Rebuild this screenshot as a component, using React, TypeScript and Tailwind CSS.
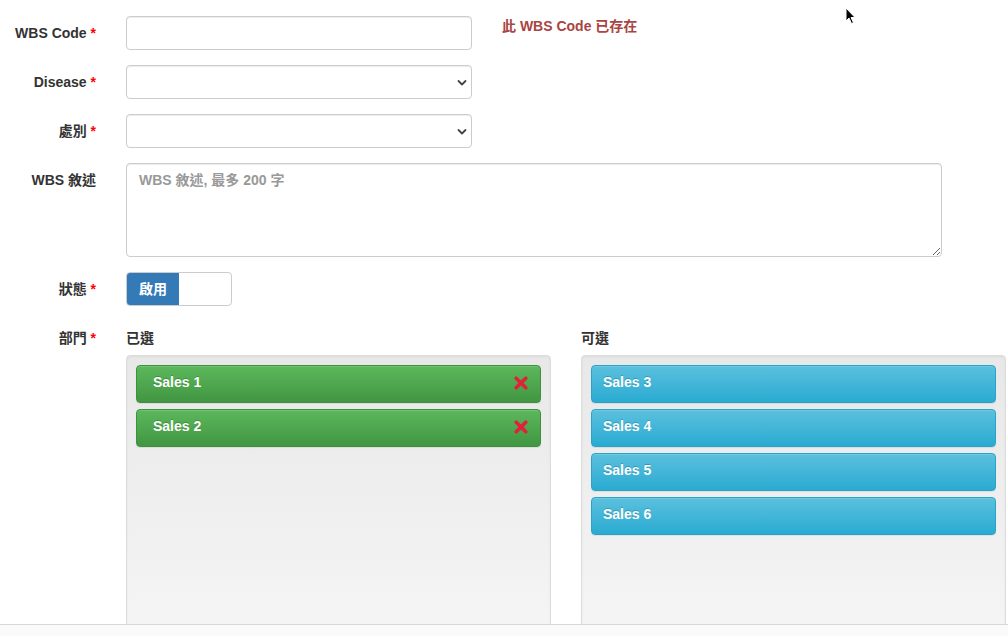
import React from "react";

const FONT = '"Liberation Sans", "Noto Sans CJK TC", Arial, sans-serif';

function Label({ text, req }: { text: string; req?: boolean }) {
  return (
    <div className="w-[111px] shrink-0 pr-[15px] pt-[7px] text-right text-[14px] leading-5 font-bold text-[#333]">
      {text}
      {req && <span className="text-[#ff0000]"> *</span>}
    </div>
  );
}

function Chevron() {
  return (
    <svg className="absolute right-[4px] top-[12px]" width="10" height="10" viewBox="0 0 10 10">
      <path d="M1.5 3 L5 6.5 L8.5 3" fill="none" stroke="#444" strokeWidth="1.8" strokeLinecap="round" strokeLinejoin="round" />
    </svg>
  );
}

function SelectBox() {
  return (
    <div className="relative w-[346px] h-[34px] rounded-[4px] border border-[#ccc] bg-white shadow-[inset_0_1px_1px_rgba(0,0,0,0.075)]">
      <Chevron />
    </div>
  );
}

function RedX() {
  return (
    <svg width="14" height="14" viewBox="0 0 14 14">
      <path d="M2.2 2.2 L11.8 11.8 M11.8 2.2 L2.2 11.8" stroke="#e0213b" strokeWidth="3.6" strokeLinecap="round" />
    </svg>
  );
}

function Item({ name, kind }: { name: string; kind: "success" | "info" }) {
  const cls =
    kind === "success"
      ? "bg-[linear-gradient(to_bottom,#5cb85c,#419641)] border-[#3e8f3e] pl-[16px]"
      : "bg-[linear-gradient(to_bottom,#5bc0de,#2aabd2)] border-[#28a4c9] pl-[11px]";
  return (
    <div
      className={`flex h-[38px] items-center justify-between rounded-[4px] border pr-[12px] pb-[3px] text-[14px] font-bold text-white [text-shadow:0_-1px_0_rgba(0,0,0,0.2)] shadow-[inset_0_1px_0_rgba(255,255,255,0.15),0_1px_1px_rgba(0,0,0,0.075)] ${cls}`}
    >
      <span>{name}</span>
      {kind === "success" && <RedX />}
    </div>
  );
}

function Panel({ children }: { children?: React.ReactNode }) {
  return (
    <div className="flex h-[281px] flex-col gap-[6px] rounded-[4px] border border-[#dcdcdc] bg-[linear-gradient(to_bottom,#e8e8e8,#f5f5f5)] p-[9px] shadow-[inset_0_1px_3px_rgba(0,0,0,0.05)]">
      {children}
    </div>
  );
}

export default function App() {
  return (
    <div className="relative h-[636px] w-[1008px] overflow-hidden bg-white pt-[16px] text-[#333]" style={{ fontFamily: FONT }}>
      {/* WBS Code */}
      <div className="mb-[15px] flex">
        <Label text="WBS Code" req />
        <div className="ml-[15px] h-[34px] w-[346px] rounded-[4px] border border-[#ccc] bg-white shadow-[inset_0_1px_1px_rgba(0,0,0,0.075)]" />
        <div className="ml-[30px] text-[14px] leading-5 font-bold text-[#a94442]">此 WBS Code 已存在</div>
      </div>

      {/* Disease */}
      <div className="mb-[15px] flex">
        <Label text="Disease" req />
        <div className="ml-[15px]">
          <SelectBox />
        </div>
      </div>

      {/* 處別 */}
      <div className="mb-[15px] flex">
        <Label text="處別" req />
        <div className="ml-[15px]">
          <SelectBox />
        </div>
      </div>

      {/* WBS 敘述 */}
      <div className="mb-[15px] flex">
        <Label text="WBS 敘述" />
        <textarea
          className="ml-[15px] h-[94px] w-[816px] rounded-[4px] border border-[#ccc] bg-white px-[12px] py-[6px] text-[14px] leading-5 font-bold text-[#555] shadow-[inset_0_1px_1px_rgba(0,0,0,0.075)] outline-none placeholder:text-[#999]"
          placeholder="WBS 敘述, 最多 200 字"
          style={{ fontFamily: FONT }}
        />
      </div>

      {/* 狀態 */}
      <div className="mb-[15px] flex">
        <Label text="狀態" req />
        <div className="ml-[15px] flex h-[34px] w-[106px] overflow-hidden rounded-[4px] border border-[#ccc] bg-white">
          <div className="flex w-[52px] items-center justify-center bg-[#337ab7] text-[14px] font-bold text-white">啟用</div>
        </div>
      </div>

      {/* 部門 */}
      <div className="flex">
        <Label text="部門" req />
        <div className="ml-[15px] grid grid-cols-[425px_425px] gap-x-[30px]">
          <div>
            <div className="pt-[7px] pb-[7px] text-[14px] leading-5 font-bold text-[#333]">已選</div>
            <Panel>
              <Item name="Sales 1" kind="success" />
              <Item name="Sales 2" kind="success" />
            </Panel>
          </div>
          <div>
            <div className="pt-[7px] pb-[7px] text-[14px] leading-5 font-bold text-[#333]">可選</div>
            <Panel>
              <Item name="Sales 3" kind="info" />
              <Item name="Sales 4" kind="info" />
              <Item name="Sales 5" kind="info" />
              <Item name="Sales 6" kind="info" />
            </Panel>
          </div>
        </div>
      </div>

      {/* bottom bar */}
      <div className="absolute bottom-0 left-0 right-0 h-[12px] border-t border-[#d6d6dc] bg-[#fafafa]" />

      {/* mouse cursor */}
      <svg className="absolute left-[845px] top-[7px]" width="12" height="18" viewBox="0 0 12 18">
        <path d="M1 1 L1 14 L4 11 L6.5 16.5 L8.5 15.5 L6 10.5 L10 10.5 Z" fill="#000" stroke="#fff" strokeWidth="1" strokeLinejoin="round" />
      </svg>
    </div>
  );
}
